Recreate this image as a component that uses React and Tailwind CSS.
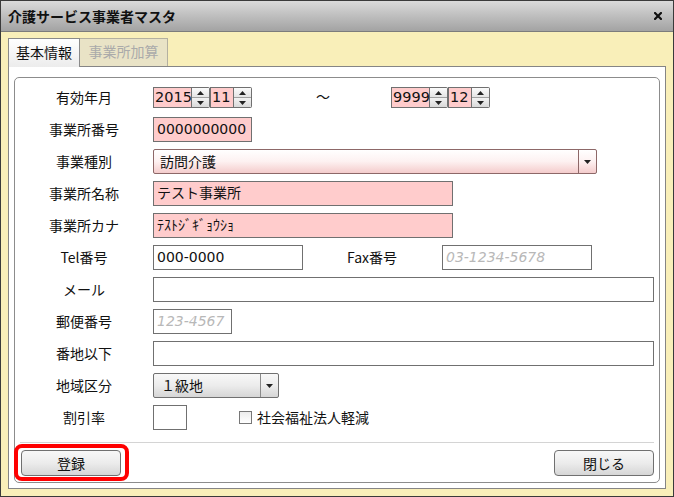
import { useState } from 'react'

const jp = "font-['Noto_Sans_CJK_JP',sans-serif]"
const inp = "font-['DejaVu_Sans','Noto_Sans_CJK_JP',sans-serif]"

function Up() {
  return <svg width="7" height="4" viewBox="0 0 7 4"><path d="M0 4 L3.5 0 L7 4 Z" fill="#222" /></svg>
}

function Down() {
  return <svg width="7" height="4" viewBox="0 0 7 4"><path d="M0 0 L3.5 4 L7 0 Z" fill="#222" /></svg>
}

function Spin() {
  return (
    <div className="flex h-[21px] w-[18px] flex-col overflow-hidden rounded-r-[2px] border border-l-0 border-[#707070]">
      <div className="flex flex-1 items-center justify-center border-b border-[#a0a0a0] bg-linear-to-b from-[#fbfbfb] to-[#e4e4e4]">
        <Up />
      </div>
      <div className="flex flex-1 items-center justify-center bg-linear-to-b from-[#f2f2f2] to-[#d9d9d9]">
        <Down />
      </div>
    </div>
  )
}

function NumBox({ value, w }) {
  return (
    <div className="flex items-center">
      <div className={`flex h-[21px] items-center border border-[#707070] bg-[#ffcccc] pl-[1px] text-[14.5px] text-[#111] ${inp} ${w}`}>
        {value}
      </div>
      <Spin />
    </div>
  )
}

function Box({ w, value, placeholder, pink }) {
  return (
    <div className={`flex h-[25px] items-center overflow-hidden border border-[#707070] px-[3px] text-[14px] ${pink ? 'bg-[#ffcccc]' : 'bg-white'} ${w}`}>
      {value
        ? <span className={`whitespace-nowrap text-[#111] ${inp}`}>{value}</span>
        : <span className={`whitespace-nowrap italic text-[#b8b8b8] ${inp}`}>{placeholder}</span>}
    </div>
  )
}

function Row({ label, children }) {
  return (
    <div className="flex h-[25px] items-center">
      <div className="w-[128px] shrink-0 pb-[2px] text-center text-[14px] leading-none text-[#111]">{label}</div>
      <div className="ml-[5px] flex flex-1 items-center">{children}</div>
    </div>
  )
}

function Button({ children }) {
  return (
    <div className="flex h-[26px] w-[100px] items-center justify-center rounded-[4px] border border-[#707070] bg-linear-to-b from-[#f7f7f7] via-[#ececec] to-[#d6d6d6] text-[14px] text-[#111]">
      {children}
    </div>
  )
}

export default function App() {
  const [checked, setChecked] = useState(false)

  return (
    <div className={`flex h-[497px] w-[674px] flex-col border border-[#3a3a3a] bg-[#f9efb9] ${jp}`}>
      <div className="flex h-[31px] shrink-0 items-center justify-between border-b border-[#7c7c7c] bg-linear-to-b from-[#dadada] to-[#a3a3a3] pl-[7px] pr-[11px]">
        <span className="text-[14px] font-bold text-[#111]">介護サービス事業者マスタ</span>
        <svg width="8" height="8" viewBox="0 0 8 8">
          <path d="M1 1 L7 7 M7 1 L1 7" stroke="#111" strokeWidth="2.2" strokeLinecap="square" />
        </svg>
      </div>

      <div className="flex flex-1 flex-col px-[7px] pb-[7px] pt-[6px]">
        <div className="flex h-[28px] shrink-0">
          <div className="relative z-10 -mb-px flex w-[72px] items-center justify-center border border-b-0 border-[#8a8a8a] bg-linear-to-b from-white to-[#ececec] pb-[2px] text-[14px] text-[#111]">
            基本情報
          </div>
          <div className="flex w-[88px] items-center justify-center border border-l-0 border-b-0 border-[#b4b0a0] bg-[#e9e3c6] pb-[2px] text-[14px] text-[#aaa]">
            事業所加算
          </div>
        </div>

        <div className="flex flex-1 flex-col border border-[#858585] bg-white px-[5px] pb-[5px] pt-[10px]">
          <div className="flex flex-1 flex-col rounded-[5px] border border-[#8c8c8c] px-[5px] pb-[6px] pt-[7px]">
            <div className="flex flex-col gap-[7px]">
              <Row label="有効年月">
                <NumBox value="2015" w="w-[39px]" />
                <NumBox value="11" w="w-[24px]" />
                <span className="ml-[64px] w-[14px] pb-[2px] text-center text-[14px] text-[#111]">〜</span>
                <div className="ml-[61px] flex">
                  <NumBox value="9999" w="w-[39px]" />
                  <NumBox value="12" w="w-[24px]" />
                </div>
              </Row>
              <Row label="事業所番号">
                <Box w="w-[99px]" value="0000000000" pink />
              </Row>
              <Row label="事業種別">
                <div className="flex h-[25px] w-[444px] rounded-[2px] border border-[#8d6868] bg-linear-to-b from-white via-[#fdf1f1] to-[#f4cccc]">
                  <div className="flex flex-1 items-center pl-[6px] text-[14px] text-[#111]">訪問介護</div>
                  <div className="flex w-[18px] items-center justify-center border-l border-[#8d6868]">
                    <Down />
                  </div>
                </div>
              </Row>
              <Row label="事業所名称">
                <Box w="w-[300px]" value="テスト事業所" pink />
              </Row>
              <Row label="事業所カナ">
                <Box w="w-[300px]" value="ﾃｽﾄｼﾞｷﾞｮｳｼｮ" pink />
              </Row>
              <Row label="Tel番号">
                <Box w="w-[150px]" value="000-0000" />
                <span className="ml-[44px] w-[95px] pb-[2px] text-[14px] leading-none text-[#111]">Fax番号</span>
                <Box w="w-[150px]" placeholder="03-1234-5678" />
              </Row>
              <Row label="メール">
                <Box w="flex-1" />
              </Row>
              <Row label="郵便番号">
                <Box w="w-[79px]" placeholder="123-4567" />
              </Row>
              <Row label="番地以下">
                <Box w="flex-1" />
              </Row>
              <Row label="地域区分">
                <div className="flex h-[25px] w-[126px] rounded-[2px] border border-[#707070] bg-linear-to-b from-[#f8f8f8] via-[#ececec] to-[#d6d6d6]">
                  <div className="flex flex-1 items-center pl-[7px] text-[14px] text-[#111]">１級地</div>
                  <div className="flex w-[18px] items-center justify-center border-l border-[#8a8a8a]">
                    <Down />
                  </div>
                </div>
              </Row>
              <Row label="割引率">
                <Box w="w-[34px]" />
                <label className="ml-[52px] flex cursor-pointer items-center text-[14px] text-[#111]" onClick={() => setChecked(!checked)}>
                  <span className="flex h-[13px] w-[13px] items-center justify-center border border-[#777] bg-linear-to-b from-[#ececec] to-white">
                    {checked && <span className="h-[7px] w-[7px] bg-[#333]" />}
                  </span>
                  <span className="ml-[5px]">社会福祉法人軽減</span>
                </label>
              </Row>
            </div>

            <div className="mt-[12px] h-px bg-[#d4d4d4]" />

            <div className="mt-[7px] flex justify-between pl-px">
              <div className="relative">
                <Button>登録</Button>
                <div className="pointer-events-none absolute -bottom-[5px] -left-[7px] -right-[8px] -top-[6px] rounded-[8px] border-4 border-[#f00]" />
              </div>
              <Button>閉じる</Button>
            </div>
          </div>
        </div>
      </div>
    </div>
  )
}
